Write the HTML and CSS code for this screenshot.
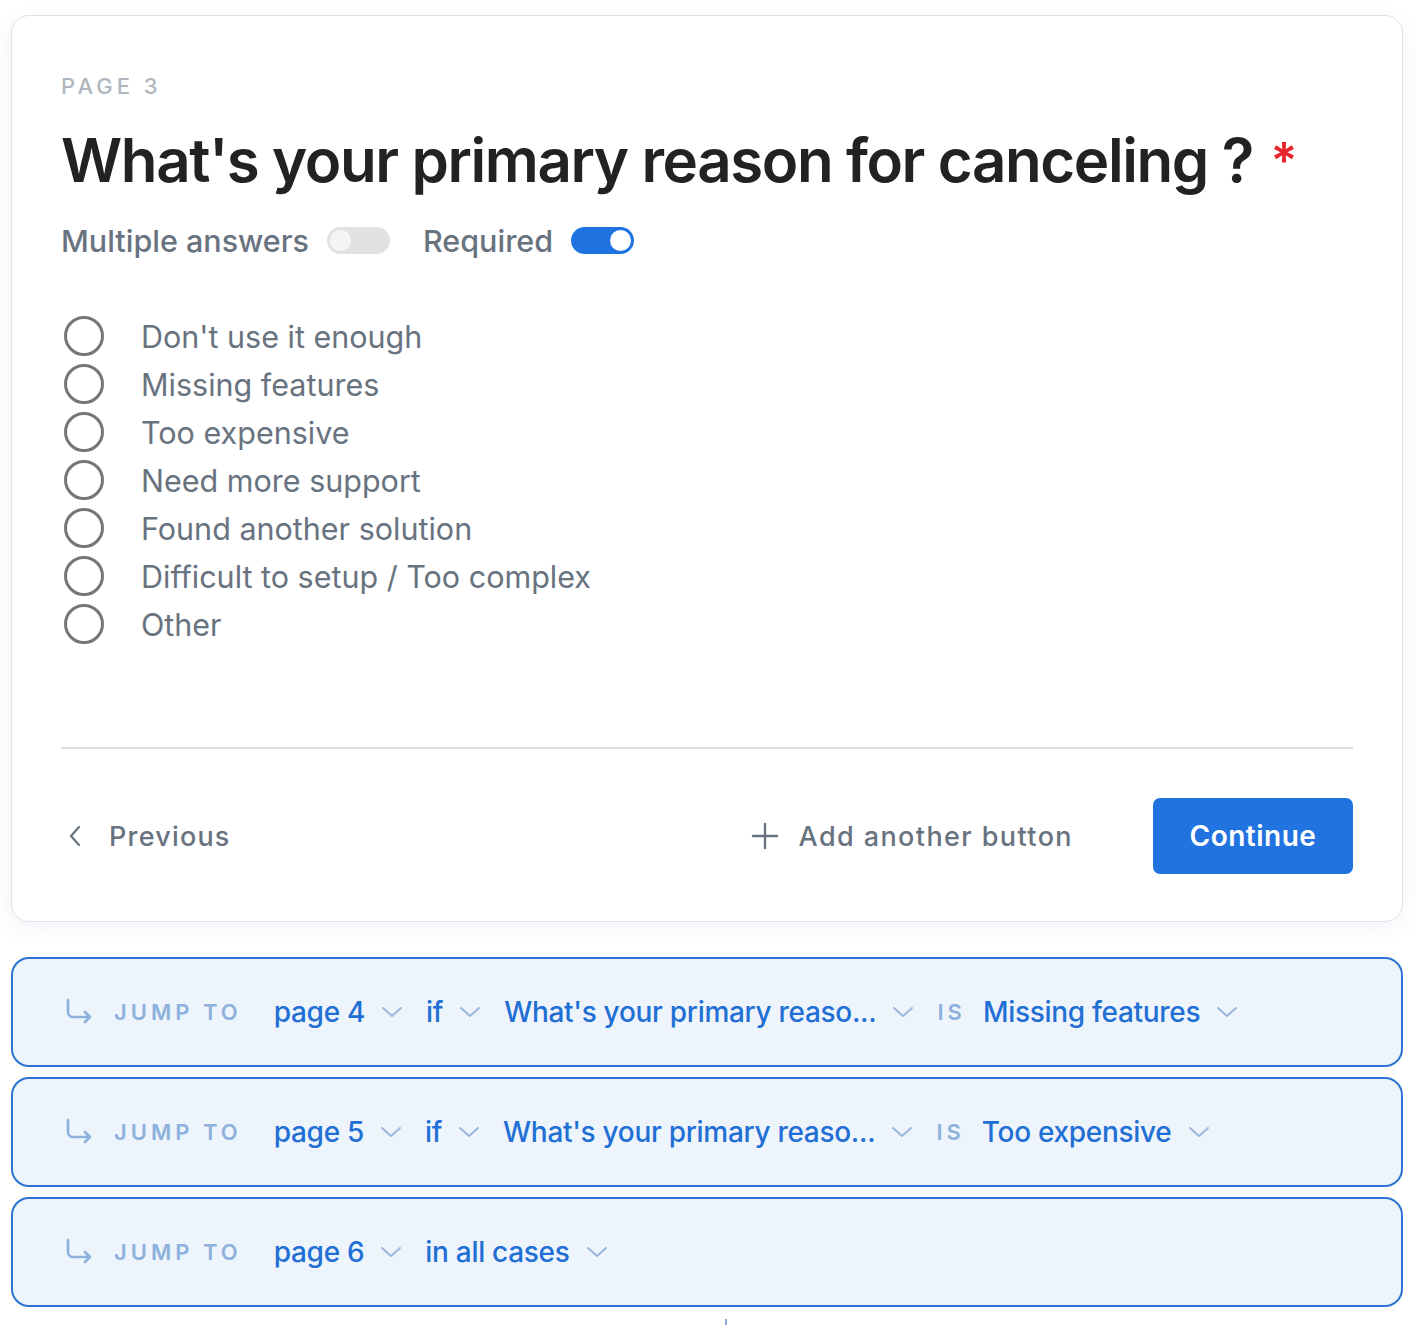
FILE: index.html
```html
<!DOCTYPE html>
<html lang="en">
<head>
  <meta charset="UTF-8">
  <meta name="viewport" content="width=device-width, initial-scale=1.0">
  <title>Page 3</title>
  <link rel="stylesheet" href="styles.css">
</head>
<body>
  <div class="page">
    <div class="card">
      <div class="page-label">PAGE 3</div>
      <h1 class="question">What's your primary reason for canceling ? <span class="star">*</span></h1>

      <div class="options">
        <span class="opt-label">Multiple answers</span>
        <span class="toggle"><span class="knob"></span></span>
        <span class="opt-label">Required</span>
        <span class="toggle on"><span class="knob"></span></span>
      </div>

      <ul class="answers">
        <li><span class="radio"></span>Don't use it enough</li>
        <li><span class="radio"></span>Missing features</li>
        <li><span class="radio"></span>Too expensive</li>
        <li><span class="radio"></span>Need more support</li>
        <li><span class="radio"></span>Found another solution</li>
        <li><span class="radio"></span>Difficult to setup / Too complex</li>
        <li><span class="radio"></span>Other</li>
      </ul>

      <div class="footer">
        <button class="link-btn prev">
          <svg width="16" height="24" viewBox="0 0 16 24"><path d="M12 3L4 12l8 9" fill="none" stroke="#68737f" stroke-width="2.2" stroke-linecap="round" stroke-linejoin="round"/></svg>
          Previous
        </button>
        <div class="footer-right">
          <button class="link-btn">
            <svg width="28" height="28" viewBox="0 0 28 28"><path d="M14 2v24M2 14h24" fill="none" stroke="#68737f" stroke-width="2.4" stroke-linecap="round"/></svg>
            Add another button
          </button>
          <button class="continue">Continue</button>
        </div>
      </div>
    </div>

    <div class="jump">
      <svg class="jump-icon" width="30" height="28" viewBox="0 0 30 28"><path d="M4 2v12a5 5 0 0 0 5 5h17M21 14l5 5-5 5" fill="none" stroke="#8db0dd" stroke-width="2.6" stroke-linecap="round" stroke-linejoin="round"/></svg>
      <span class="jump-label">JUMP TO</span>
      <span class="pick">page 4</span><svg class="chev" width="22" height="14" viewBox="0 0 22 14"><path d="M2 3l9 8 9-8" fill="none" stroke="#9bb6dc" stroke-width="2" stroke-linecap="round" stroke-linejoin="round"/></svg>
      <span class="pick">if</span><svg class="chev" width="22" height="14" viewBox="0 0 22 14"><path d="M2 3l9 8 9-8" fill="none" stroke="#9bb6dc" stroke-width="2" stroke-linecap="round" stroke-linejoin="round"/></svg>
      <span class="pick">What's your primary reaso...</span><svg class="chev" width="22" height="14" viewBox="0 0 22 14"><path d="M2 3l9 8 9-8" fill="none" stroke="#9bb6dc" stroke-width="2" stroke-linecap="round" stroke-linejoin="round"/></svg>
      <span class="jump-label is">IS</span>
      <span class="pick">Missing features</span><svg class="chev" width="22" height="14" viewBox="0 0 22 14"><path d="M2 3l9 8 9-8" fill="none" stroke="#9bb6dc" stroke-width="2" stroke-linecap="round" stroke-linejoin="round"/></svg>
    </div>

    <div class="jump">
      <svg class="jump-icon" width="30" height="28" viewBox="0 0 30 28"><path d="M4 2v12a5 5 0 0 0 5 5h17M21 14l5 5-5 5" fill="none" stroke="#8db0dd" stroke-width="2.6" stroke-linecap="round" stroke-linejoin="round"/></svg>
      <span class="jump-label">JUMP TO</span>
      <span class="pick">page 5</span><svg class="chev" width="22" height="14" viewBox="0 0 22 14"><path d="M2 3l9 8 9-8" fill="none" stroke="#9bb6dc" stroke-width="2" stroke-linecap="round" stroke-linejoin="round"/></svg>
      <span class="pick">if</span><svg class="chev" width="22" height="14" viewBox="0 0 22 14"><path d="M2 3l9 8 9-8" fill="none" stroke="#9bb6dc" stroke-width="2" stroke-linecap="round" stroke-linejoin="round"/></svg>
      <span class="pick">What's your primary reaso...</span><svg class="chev" width="22" height="14" viewBox="0 0 22 14"><path d="M2 3l9 8 9-8" fill="none" stroke="#9bb6dc" stroke-width="2" stroke-linecap="round" stroke-linejoin="round"/></svg>
      <span class="jump-label is">IS</span>
      <span class="pick">Too expensive</span><svg class="chev" width="22" height="14" viewBox="0 0 22 14"><path d="M2 3l9 8 9-8" fill="none" stroke="#9bb6dc" stroke-width="2" stroke-linecap="round" stroke-linejoin="round"/></svg>
    </div>

    <div class="jump">
      <svg class="jump-icon" width="30" height="28" viewBox="0 0 30 28"><path d="M4 2v12a5 5 0 0 0 5 5h17M21 14l5 5-5 5" fill="none" stroke="#8db0dd" stroke-width="2.6" stroke-linecap="round" stroke-linejoin="round"/></svg>
      <span class="jump-label">JUMP TO</span>
      <span class="pick">page 6</span><svg class="chev" width="22" height="14" viewBox="0 0 22 14"><path d="M2 3l9 8 9-8" fill="none" stroke="#9bb6dc" stroke-width="2" stroke-linecap="round" stroke-linejoin="round"/></svg>
      <span class="pick">in all cases</span><svg class="chev" width="22" height="14" viewBox="0 0 22 14"><path d="M2 3l9 8 9-8" fill="none" stroke="#9bb6dc" stroke-width="2" stroke-linecap="round" stroke-linejoin="round"/></svg>
    </div>

    <div class="tail"></div>
  </div>
</body>
</html>
```

FILE: styles.css
```css
body {
  margin: 0;
  background: #fff;
  font-family: Inter, "Noto Sans", sans-serif;
}
.page {
  padding: 15px 13px 0 11px;
}
.card {
  border: 1px solid #e0e2e7;
  border-radius: 18px;
  padding: 57px 49px 47px 49px;
  box-shadow: 0 6px 22px rgba(40, 80, 160, 0.07);
  background: #fff;
}
.page-label {
  font-size: 22px;
  line-height: 26px;
  letter-spacing: 4px;
  color: #b0b6bd;
  font-weight: 500;
}
.question {
  margin: 23px 0 0;
  font-size: 60px;
  line-height: 76px;
  font-weight: 600;
  color: #222;
  letter-spacing: -1.4px;
  white-space: nowrap;
}
.star {
  color: #e8242f;
  font-size: 50px;
  vertical-align: top;
  margin-left: 4px;
}
.options {
  display: flex;
  align-items: center;
  margin-top: 24px;
  height: 36px;
}
.opt-label {
  font-size: 30.5px;
  color: #68737f;
  font-weight: 500;
  margin-right: 18px;
}
.toggle {
  width: 63px;
  height: 27px;
  border-radius: 14px;
  background: #e2e2e2;
  display: flex;
  align-items: center;
  padding: 0 3px;
  box-sizing: border-box;
  margin-right: 33px;
}
.toggle .knob {
  width: 21px;
  height: 21px;
  border-radius: 50%;
  background: #f5f5f5;
}
.toggle.on {
  background: #1f73e0;
  justify-content: flex-end;
}
.toggle.on .knob {
  background: #fff;
}
.answers {
  list-style: none;
  margin: 54px 0 0;
  padding: 0;
}
.answers li {
  display: flex;
  align-items: center;
  height: 48px;
  font-size: 30.5px;
  color: #68737f;
}
.radio {
  width: 34px;
  height: 34px;
  border: 3px solid #767676;
  border-radius: 50%;
  margin: 0 37px 0 3px;
}
.footer {
  margin-top: 99px;
  border-top: 2px solid #dcdde2;
  padding-top: 49px;
  display: flex;
  align-items: center;
  justify-content: space-between;
}
.footer-right {
  display: flex;
  align-items: center;
  gap: 80px;
}
.link-btn {
  background: none;
  border: none;
  padding: 0;
  display: flex;
  align-items: center;
  gap: 20px;
  font-family: inherit;
  font-size: 27px;
  font-weight: 500;
  letter-spacing: 1.4px;
  color: #68737f;
}
.link-btn.prev {
  padding-left: 6px;
  gap: 26px;
  letter-spacing: 1.2px;
}
.continue {
  width: 200px;
  height: 76px;
  border: none;
  border-radius: 7px;
  background: #2174e0;
  color: #fff;
  font-family: inherit;
  font-size: 28px;
  font-weight: 600;
  letter-spacing: 0.5px;
}
.jump {
  margin-top: 10px;
  height: 110px;
  box-sizing: border-box;
  border: 2px solid #2c73d2;
  border-radius: 18px;
  background: #edf4fc;
  display: flex;
  align-items: center;
  padding-left: 51px;
}
.card + .jump {
  margin-top: 35px;
}
.jump-icon {
  margin-right: 20px;
}
.jump-label {
  font-size: 22px;
  letter-spacing: 4px;
  color: #8db0dd;
  font-weight: 600;
  margin-right: 32px;
}
.jump-label.is {
  margin-right: 17px;
}
.pick {
  font-size: 28px;
  font-weight: 500;
  color: #1f6fd4;
  letter-spacing: -0.3px;
  margin-right: 16px;
}
.chev {
  margin-right: 23px;
}
.tail {
  width: 2px;
  height: 6px;
  margin: 12px 0 0 714px;
  background: #8db0dd;
}
```
